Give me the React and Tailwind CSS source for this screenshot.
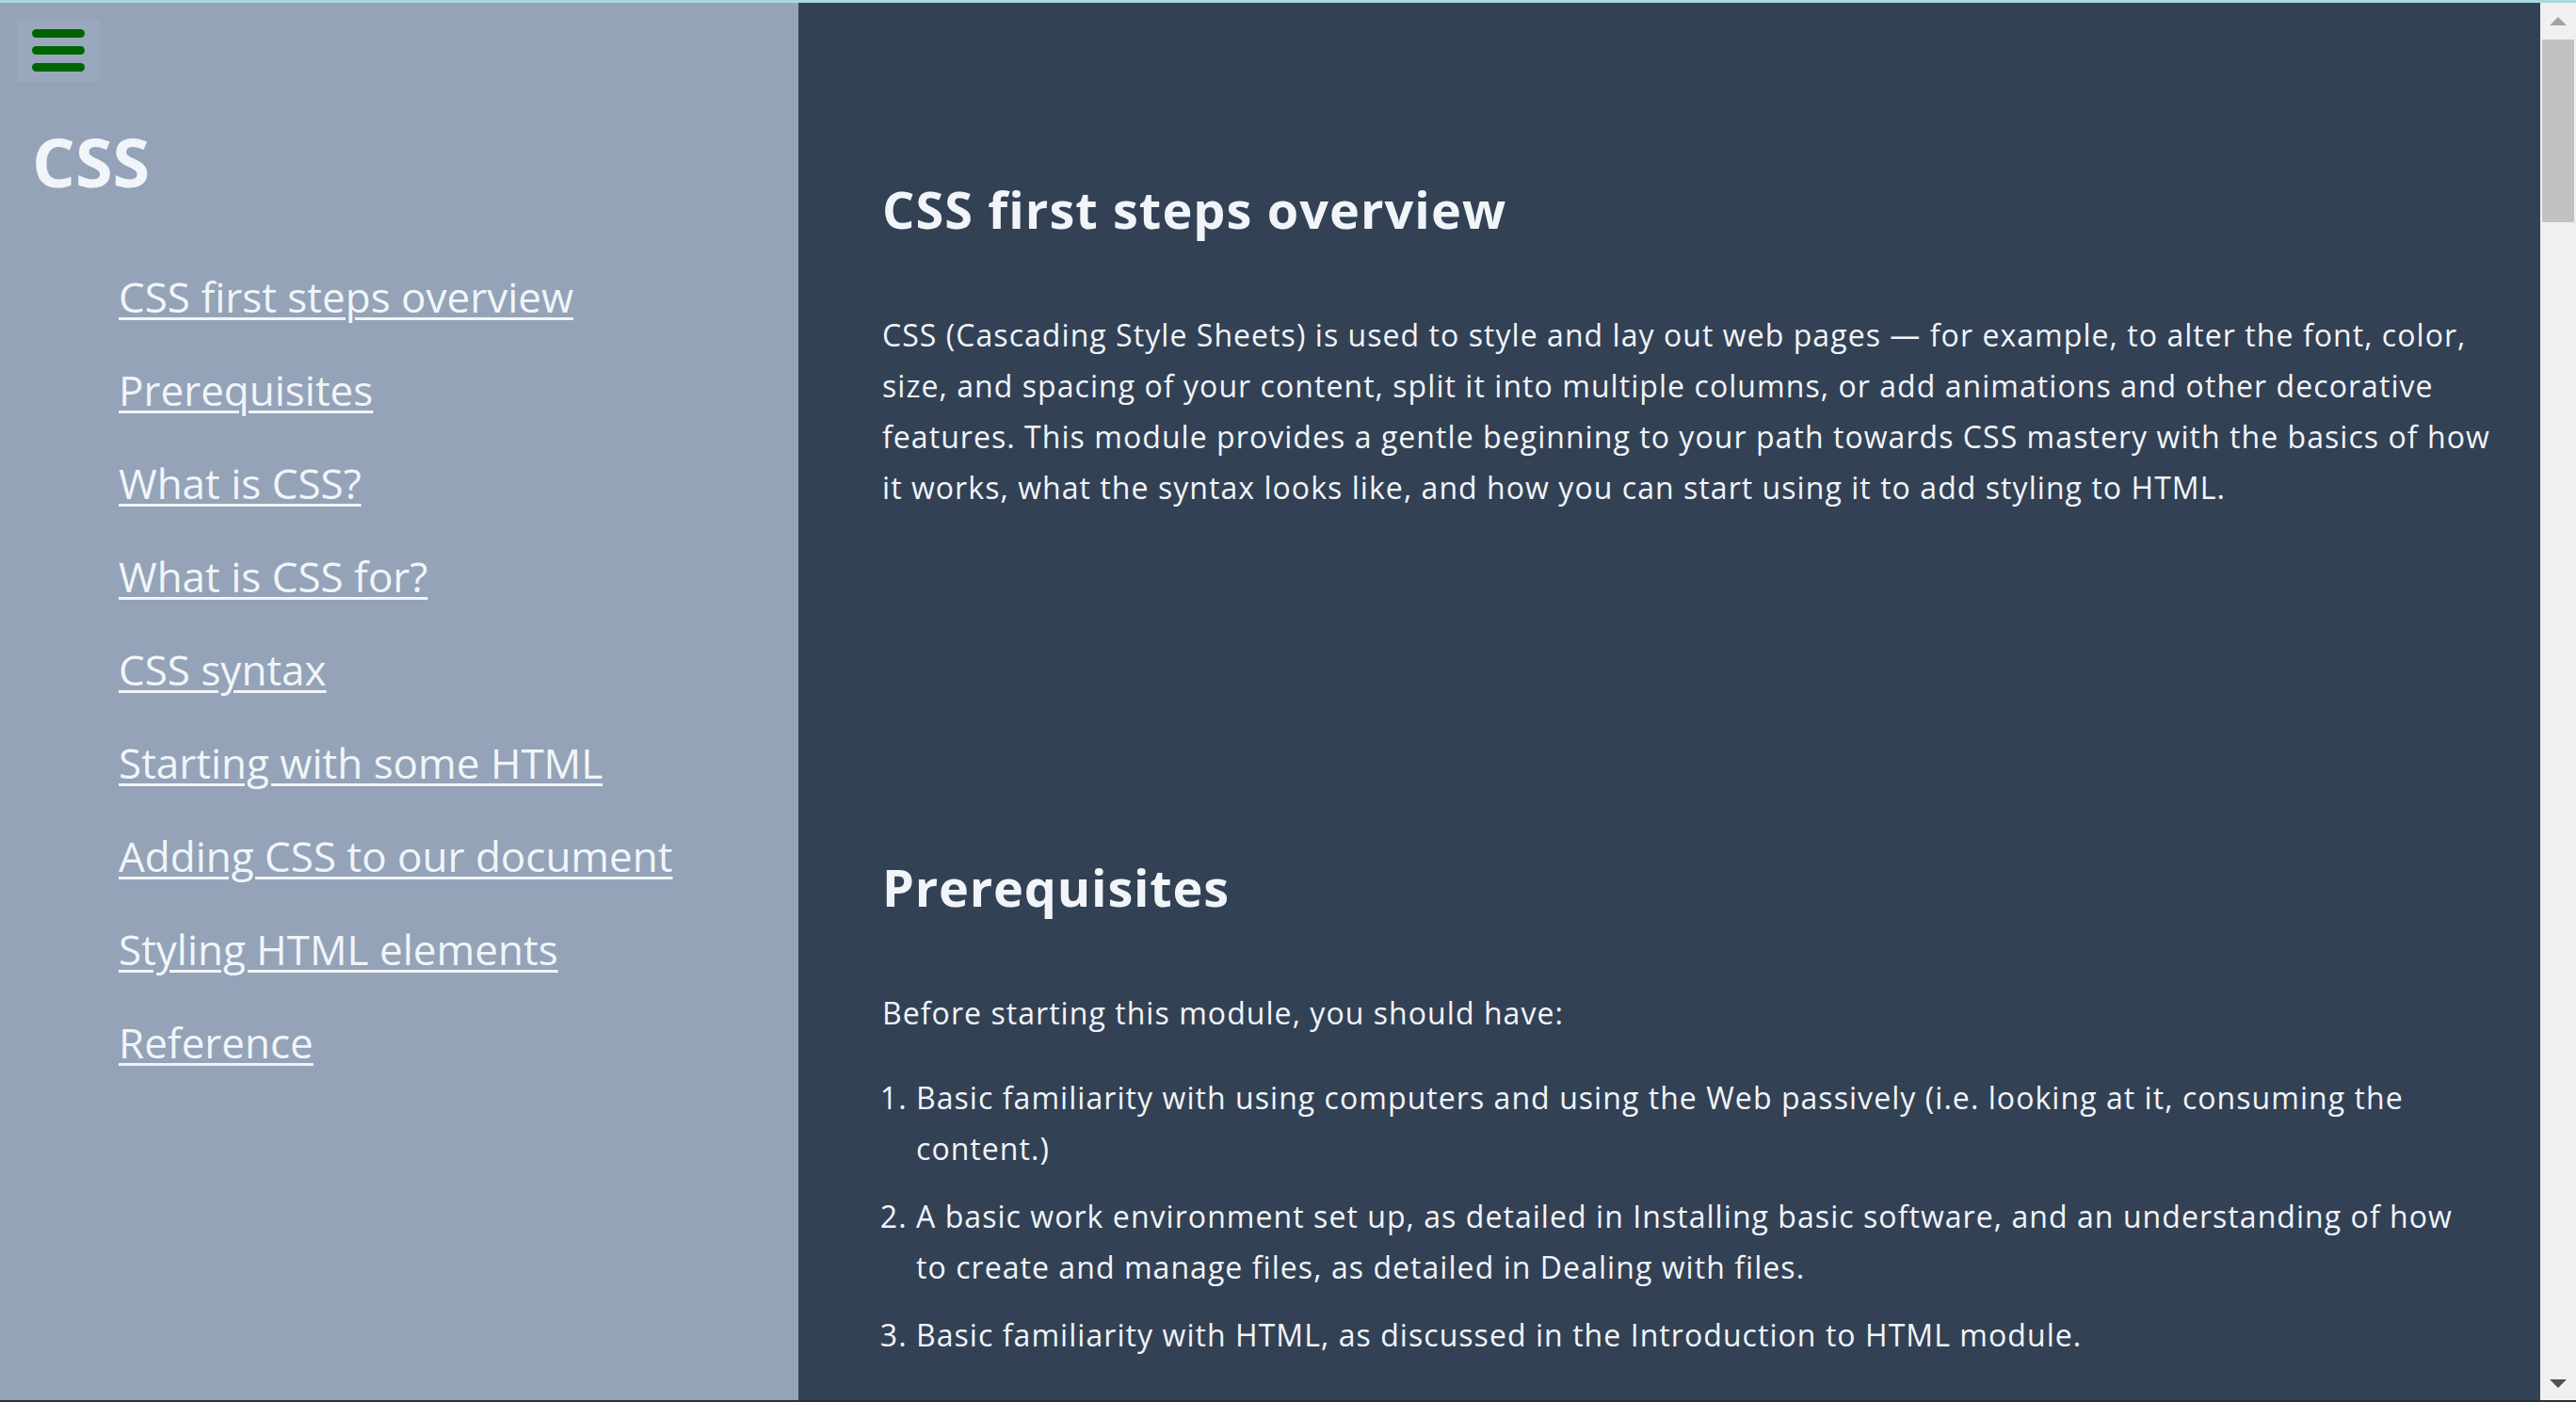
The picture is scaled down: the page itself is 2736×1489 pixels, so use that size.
import React from 'react'

const links = [
  'CSS first steps overview',
  'Prerequisites',
  'What is CSS?',
  'What is CSS for?',
  'CSS syntax',
  'Starting with some HTML',
  'Adding CSS to our document',
  'Styling HTML elements',
  'Reference',
]

const Scrollbar = () => (
  <div className="w-[38px] shrink-0 bg-[#f0f0f0] flex flex-col">
    <div className="h-[39px] flex items-center justify-center">
      <svg width="18" height="9" viewBox="0 0 18 9">
        <path d="M0 9 L9 0 L18 9 Z" fill="#a3a3a3" />
      </svg>
    </div>
    <div className="mx-[2px] h-[194px] bg-[#c1c1c1]" />
    <div className="flex-1" />
    <div className="h-[22px] flex items-start justify-center">
      <svg width="18" height="9" viewBox="0 0 18 9">
        <path d="M0 0 L18 0 L9 9 Z" fill="#505050" />
      </svg>
    </div>
  </div>
)

const App = () => {
  return (
    <div className="h-screen w-full flex flex-col overflow-hidden font-['Open_Sans',sans-serif] text-[#f1f5f9]">
      <div className="h-[3px] shrink-0 bg-[#a8d8dc]" />
      <div className="flex flex-1 min-h-0">
        {/* Sidebar */}
        <aside className="w-[848px] shrink-0 bg-[#94a3b8] flex flex-col">
          <button className="mt-[17px] ml-[18px] w-[88px] h-[67px] bg-white/5 flex flex-col items-center justify-center gap-[9px]">
            <span className="block w-[56px] h-[9px] rounded-full bg-[#006400]" />
            <span className="block w-[56px] h-[9px] rounded-full bg-[#006400]" />
            <span className="block w-[56px] h-[9px] rounded-full bg-[#006400]" />
          </button>
          <h1 className="mt-[48px] ml-[34px] text-[72px] leading-[72px] font-bold">CSS</h1>
          <ul className="mt-[59px] pl-[126px]">
            {links.map(l => (
              <li key={l} className="text-[44px] leading-[99px]">
                <a href="#" className="underline decoration-[3px] underline-offset-[5px]">{l}</a>
              </li>
            ))}
          </ul>
        </aside>

        {/* Content */}
        <main className="flex-1 bg-[#334155] pl-[89px] pr-[40px] pt-[187px] overflow-hidden">
          <section>
            <h2 className="text-[54px] leading-[65px] font-bold tracking-[0.02em]">CSS first steps overview</h2>
            <p className="mt-[74px] text-[32px] leading-[54px] tracking-[0.033em]">
              CSS (Cascading Style Sheets) is used to style and lay out web pages — for example, to alter the font, color, size, and spacing of your content, split it into multiple columns, or add animations and other decorative features. This module provides a gentle beginning to your path towards CSS mastery with the basics of how it works, what the syntax looks like, and how you can start using it to add styling to HTML.
            </p>
          </section>
          <section className="mt-[365px]">
            <h2 className="text-[54px] leading-[65px] font-bold tracking-[0.015em]">Prerequisites</h2>
            <p className="mt-[74px] text-[32px] leading-[54px] tracking-[0.033em]">Before starting this module, you should have:</p>
            <ol className="mt-[36px] pl-[36px] pr-[24px] list-decimal text-[32px] leading-[54px] tracking-[0.033em] flex flex-col gap-[18px]">
              <li>Basic familiarity with using computers and using the Web passively (i.e. looking at it, consuming the content.)</li>
              <li>A basic work environment set up, as detailed in Installing basic software, and an understanding of how to create and manage files, as detailed in Dealing with files.</li>
              <li>Basic familiarity with HTML, as discussed in the Introduction to HTML module.</li>
            </ol>
          </section>
        </main>

        <Scrollbar />
      </div>
      <div className="h-[2px] shrink-0 bg-[#2a2f38]" />
    </div>
  )
}

export default App
